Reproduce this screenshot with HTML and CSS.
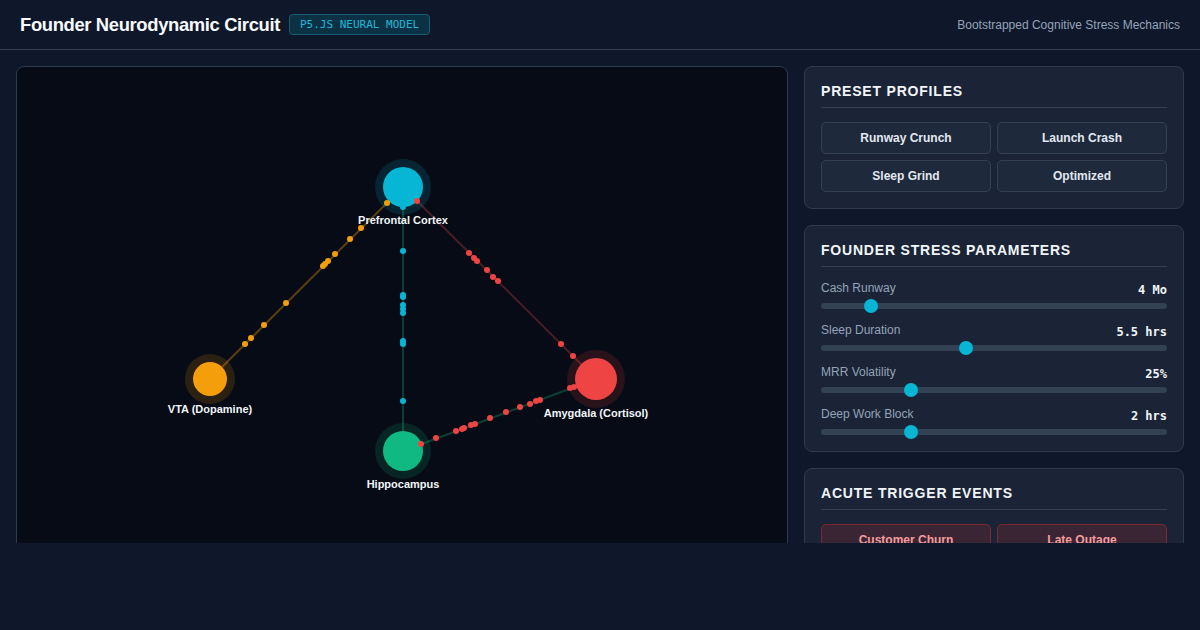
FILE: index.html
```html
<!DOCTYPE html>
<html lang="en">
<head>
<meta charset="utf-8">
<title>Founder Neurodynamic Circuit</title>
<link rel="stylesheet" href="styles.css">
</head>
<body>
<div class="viewport">
  <header class="topbar">
    <div class="brand">
      <h1 class="title">Founder Neurodynamic Circuit</h1>
      <span class="badge">P5.JS NEURAL MODEL</span>
    </div>
    <div class="subtitle">Bootstrapped Cognitive Stress Mechanics</div>
  </header>
  <main class="layout">
    <section class="canvas-panel">
      <svg class="circuit" viewBox="17 67 770 540" width="770" height="540" xmlns="http://www.w3.org/2000/svg">
        <!-- edges -->
        <line x1="210" y1="379" x2="403" y2="187" stroke="#f59e0b" stroke-opacity="0.35" stroke-width="2"/>
        <line x1="403" y1="187" x2="403" y2="451" stroke="#10b981" stroke-opacity="0.3" stroke-width="2"/>
        <line x1="403" y1="187" x2="596" y2="379" stroke="#ef4444" stroke-opacity="0.3" stroke-width="2"/>
        <line x1="403" y1="451" x2="596" y2="379" stroke="#10b981" stroke-opacity="0.3" stroke-width="2"/>
        <!-- halos -->
        <circle cx="403" cy="187" r="28" fill="#06b6d4" fill-opacity="0.15"/>
        <circle cx="210" cy="379" r="25" fill="#f59e0b" fill-opacity="0.15"/>
        <circle cx="596" cy="379" r="29" fill="#ef4444" fill-opacity="0.15"/>
        <circle cx="403" cy="451" r="28" fill="#10b981" fill-opacity="0.15"/>
        <!-- nodes -->
        <circle cx="403" cy="187" r="20" fill="#06b6d4"/>
        <circle cx="210" cy="379" r="17" fill="#f59e0b"/>
        <circle cx="596" cy="379" r="21" fill="#ef4444"/>
        <circle cx="403" cy="451" r="20" fill="#10b981"/>
        <!-- particles: VTA - PFC -->
        <g fill="#f59e0b">
          <circle cx="387" cy="203" r="3"/>
          <circle cx="361" cy="228" r="3"/>
          <circle cx="350" cy="239" r="3"/>
          <circle cx="335" cy="254" r="3"/>
          <circle cx="328" cy="261" r="3"/>
          <circle cx="325" cy="264" r="3"/>
          <circle cx="323" cy="266" r="3"/>
          <circle cx="286" cy="303" r="3"/>
          <circle cx="264" cy="325" r="3"/>
          <circle cx="251" cy="338" r="3"/>
          <circle cx="245" cy="344" r="3"/>
        </g>
        <!-- particles: PFC - Hippocampus -->
        <g fill="#06b6d4">
          <circle cx="403" cy="207" r="3"/>
          <circle cx="403" cy="251" r="3"/>
          <circle cx="403" cy="295" r="3"/>
          <circle cx="403" cy="297" r="3"/>
          <circle cx="403" cy="305" r="3"/>
          <circle cx="403" cy="309" r="3"/>
          <circle cx="403" cy="313" r="3"/>
          <circle cx="403" cy="341" r="3"/>
          <circle cx="403" cy="344" r="3"/>
          <circle cx="403" cy="401" r="3"/>
        </g>
        <!-- particles: PFC - Amygdala -->
        <g fill="#ef4444">
          <circle cx="417" cy="201" r="3"/>
          <circle cx="469" cy="253" r="3"/>
          <circle cx="474" cy="258" r="3"/>
          <circle cx="477" cy="261" r="3"/>
          <circle cx="487" cy="270" r="3"/>
          <circle cx="493" cy="277" r="3"/>
          <circle cx="498" cy="281" r="3"/>
          <circle cx="561" cy="344" r="3"/>
          <circle cx="573" cy="356" r="3"/>
        </g>
        <!-- particles: Amygdala - Hippocampus -->
        <g fill="#ef4444">
          <circle cx="421" cy="444" r="3"/>
          <circle cx="436" cy="438" r="3"/>
          <circle cx="456" cy="431" r="3"/>
          <circle cx="462" cy="429" r="3"/>
          <circle cx="464" cy="428" r="3"/>
          <circle cx="471" cy="425" r="3"/>
          <circle cx="475" cy="424" r="3"/>
          <circle cx="490" cy="418" r="3"/>
          <circle cx="506" cy="412" r="3"/>
          <circle cx="520" cy="407" r="3"/>
          <circle cx="530" cy="404" r="3"/>
          <circle cx="536" cy="401" r="3"/>
          <circle cx="540" cy="400" r="3"/>
          <circle cx="570" cy="388" r="3"/>
          <circle cx="574" cy="387" r="3"/>
        </g>
        <!-- labels -->
        <g class="node-label">
          <text x="403" y="224">Prefrontal Cortex</text>
          <text x="210" y="413">VTA (Dopamine)</text>
          <text x="596" y="417">Amygdala (Cortisol)</text>
          <text x="403" y="488">Hippocampus</text>
        </g>
      </svg>
    </section>
    <aside class="sidebar">
      <section class="card">
        <h2 class="card-title">Preset Profiles</h2>
        <div class="btn-grid">
          <button class="btn">Runway Crunch</button>
          <button class="btn">Launch Crash</button>
          <button class="btn">Sleep Grind</button>
          <button class="btn">Optimized</button>
        </div>
      </section>
      <section class="card">
        <h2 class="card-title">Founder Stress Parameters</h2>
        <div class="params">
          <div class="param">
            <div class="param-head"><span class="param-label">Cash Runway</span><span class="param-value">4 Mo</span></div>
            <input class="slider" type="range" min="1" max="24" step="1" value="4">
          </div>
          <div class="param">
            <div class="param-head"><span class="param-label">Sleep Duration</span><span class="param-value">5.5 hrs</span></div>
            <input class="slider" type="range" min="3" max="9" step="0.5" value="5.5">
          </div>
          <div class="param">
            <div class="param-head"><span class="param-label">MRR Volatility</span><span class="param-value">25%</span></div>
            <input class="slider" type="range" min="0" max="100" step="1" value="25">
          </div>
          <div class="param">
            <div class="param-head"><span class="param-label">Deep Work Block</span><span class="param-value">2 hrs</span></div>
            <input class="slider" type="range" min="0" max="8" step="0.5" value="2">
          </div>
        </div>
      </section>
      <section class="card">
        <h2 class="card-title">Acute Trigger Events</h2>
        <div class="btn-grid">
          <button class="btn btn-danger">Customer Churn</button>
          <button class="btn btn-danger">Late Outage</button>
        </div>
      </section>
    </aside>
  </main>
</div>
</body>
</html>
```
FILE: styles.css
```css
* { box-sizing: border-box; }
html, body { margin: 0; padding: 0; }
body {
  background: #0f172a;
  color: #e2e8f0;
  font-family: "Liberation Sans", Arial, sans-serif;
  width: 1200px;
  height: 630px;
  overflow: hidden;
}
.viewport {
  height: 543px;
  overflow: hidden;
}
.topbar {
  height: 50px;
  border-bottom: 1px solid #334155;
  display: flex;
  align-items: center;
  justify-content: space-between;
  padding: 0 20px;
}
.brand {
  display: flex;
  align-items: center;
  gap: 9px;
}
.title {
  margin: 0;
  font-size: 18.4px;
  font-weight: 700;
  letter-spacing: -0.35px;
  color: #f8fafc;
}
.badge {
  font-family: "DejaVu Sans Mono", "Liberation Mono", monospace;
  font-size: 11px;
  color: #22b8d6;
  background: #0b3145;
  border: 1px solid #155e75;
  border-radius: 4px;
  padding: 3px 10px;
  line-height: 13px;
}
.subtitle {
  font-size: 12px;
  color: #94a3b8;
}
.layout {
  display: grid;
  grid-template-columns: 1fr 380px;
  gap: 16px;
  padding: 16px;
}
.canvas-panel {
  background: #060b15;
  border: 1px solid #2b3a50;
  border-radius: 8px;
  height: 560px;
  overflow: hidden;
}
.circuit { display: block; }
.node-label text {
  font-family: "Liberation Sans", Arial, sans-serif;
  font-size: 11px;
  font-weight: 700;
  fill: #f1f5f9;
  text-anchor: middle;
}
.sidebar {
  display: flex;
  flex-direction: column;
  gap: 16px;
}
.card {
  background: #1b2436;
  border: 1px solid #2e3b4f;
  border-radius: 8px;
  padding: 16px;
}
.card-title {
  margin: 0 0 14px;
  font-size: 14px;
  line-height: 17px;
  font-weight: 700;
  letter-spacing: 0.8px;
  text-transform: uppercase;
  color: #f1f5f9;
  padding-bottom: 7px;
  border-bottom: 1px solid #334155;
}
.btn-grid {
  display: grid;
  grid-template-columns: 1fr 1fr;
  gap: 6px;
}
.btn {
  height: 32px;
  background: #1e293b;
  border: 1px solid #334155;
  border-radius: 5px;
  color: #e2e8f0;
  font-family: "Liberation Sans", Arial, sans-serif;
  font-size: 12px;
  font-weight: 700;
  padding: 0;
}
.btn-danger {
  background: #3a2535;
  border-color: #7a2a33;
  color: #f49c9c;
}
.params {
  display: flex;
  flex-direction: column;
  gap: 14px;
}
.param {
  display: flex;
  flex-direction: column;
  gap: 6px;
}
.param-head {
  display: flex;
  justify-content: space-between;
  align-items: flex-end;
  height: 16px;
}
.param-label {
  font-size: 12px;
  color: #94a3b8;
  line-height: 14px;
  align-self: flex-start;
}
.param-value {
  font-family: "DejaVu Sans Mono", "Liberation Mono", monospace;
  font-size: 12px;
  font-weight: 700;
  color: #f1f5f9;
  line-height: 14px;
}
.slider {
  -webkit-appearance: none;
  appearance: none;
  width: 100%;
  height: 6px;
  margin: 0;
  background: #334155;
  border-radius: 3px;
  outline: none;
}
.slider::-webkit-slider-runnable-track {
  height: 6px;
  background: transparent;
  border-radius: 3px;
}
.slider::-webkit-slider-thumb {
  -webkit-appearance: none;
  appearance: none;
  width: 14px;
  height: 14px;
  border-radius: 50%;
  background: #06b6d4;
  margin-top: -4px;
  border: none;
}
```
